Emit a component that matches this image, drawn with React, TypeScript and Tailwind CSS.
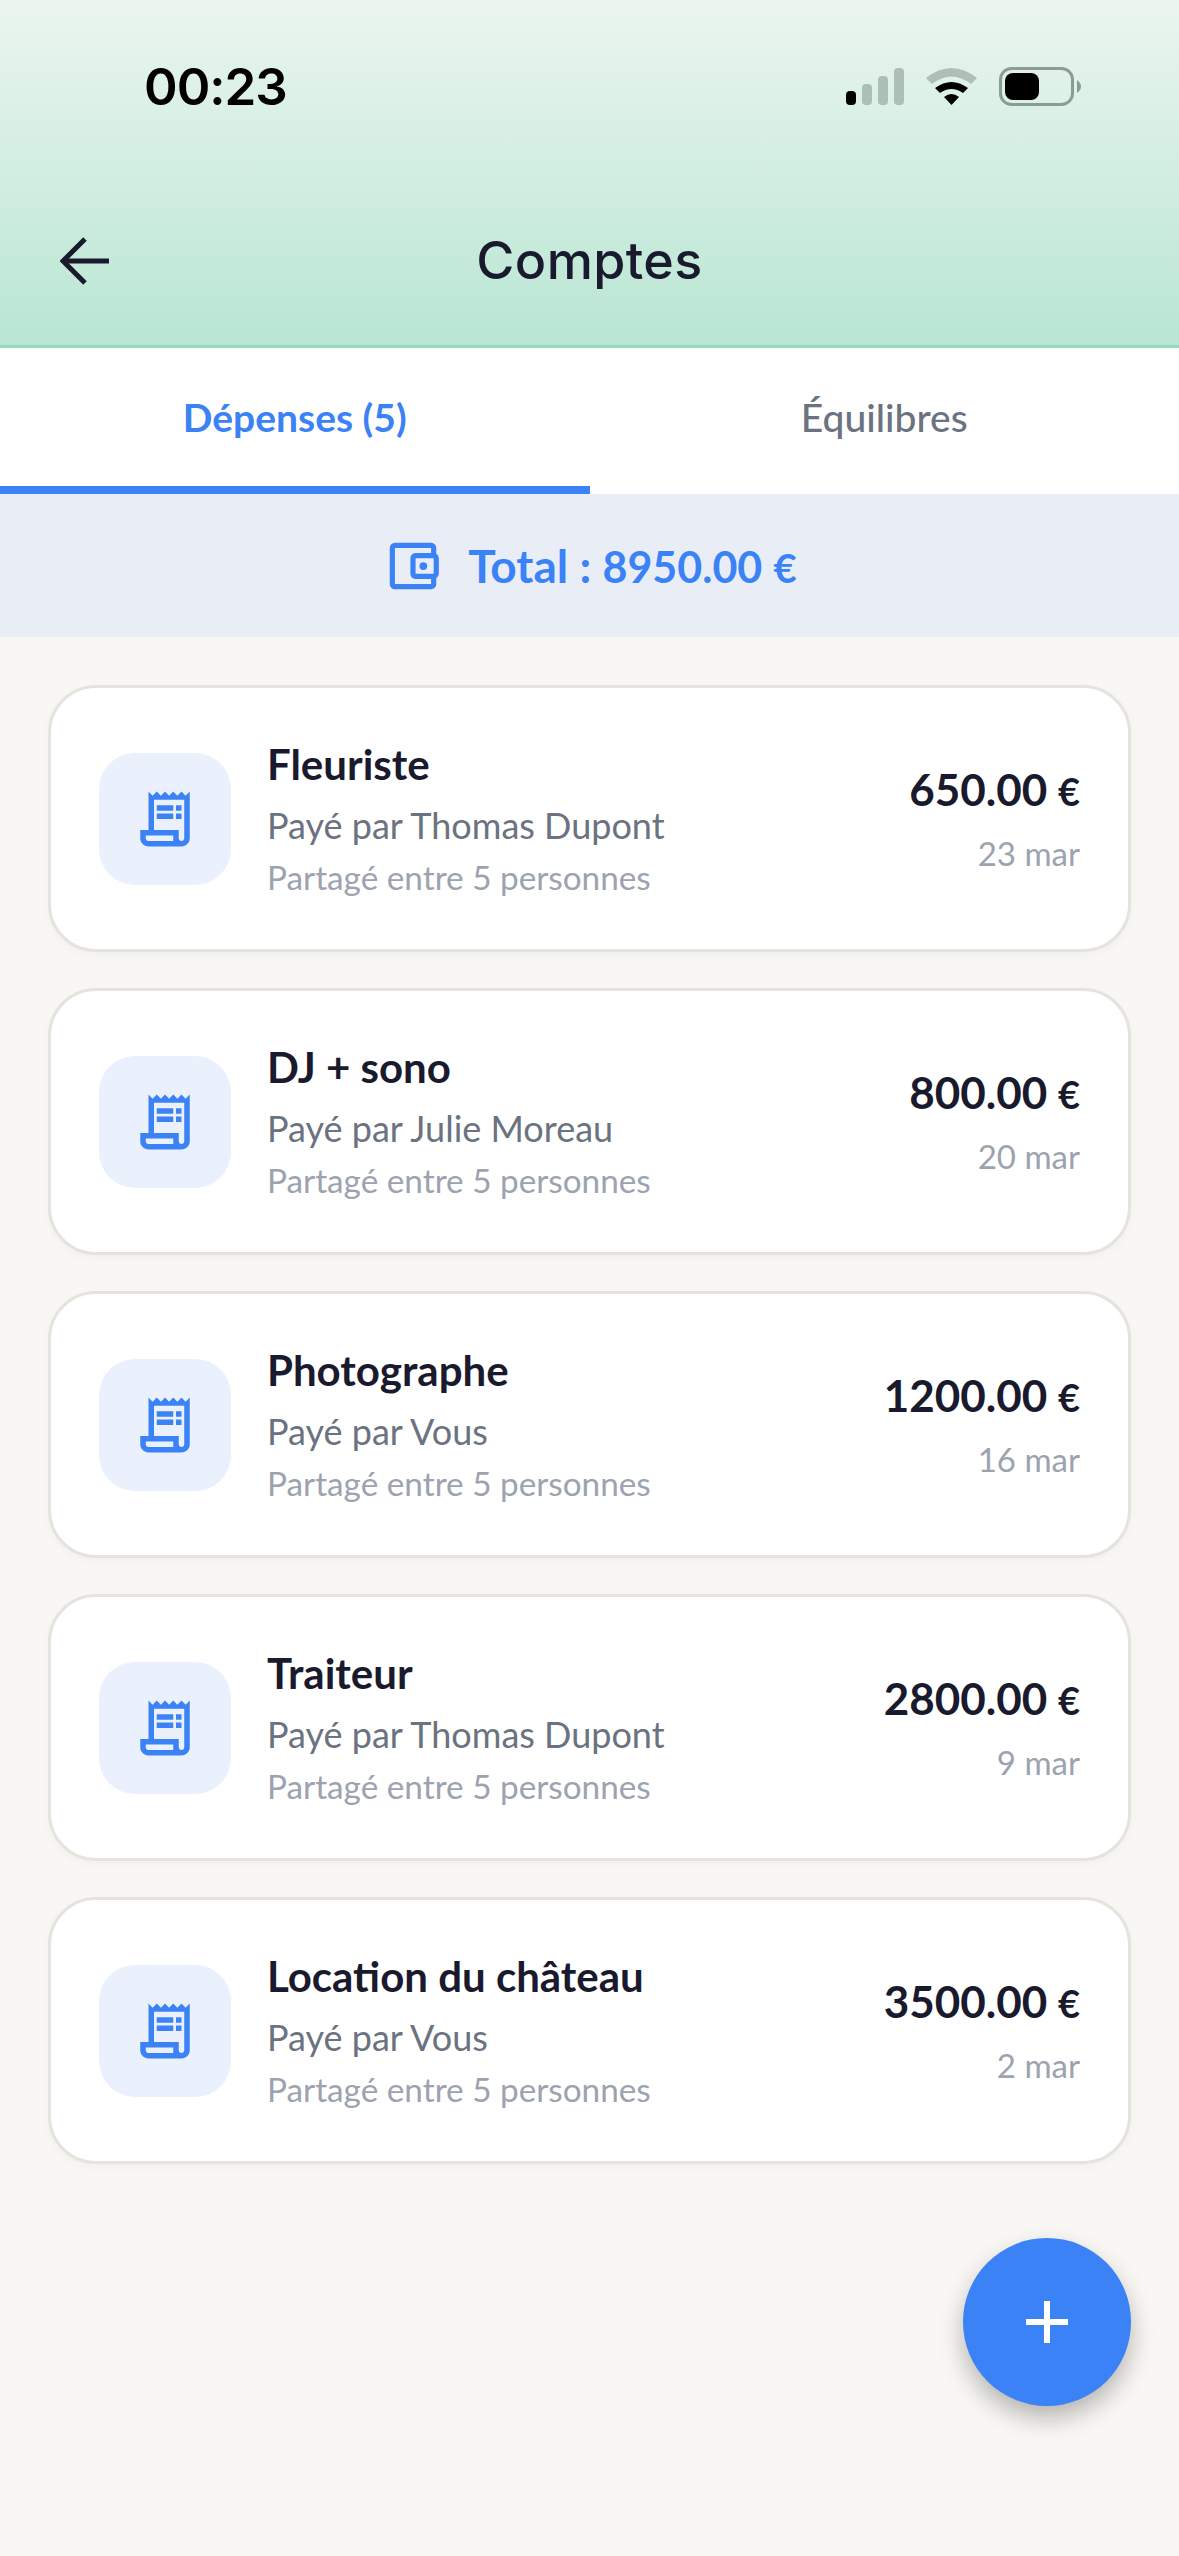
import React from 'react';
import { MdOutlineAccountBalanceWallet, MdOutlineReceiptLong } from 'react-icons/md';

const expenses = [
  { title: 'Fleuriste', payer: 'Payé par Thomas Dupont', amount: '650.00', date: '23 mar' },
  { title: 'DJ + sono', payer: 'Payé par Julie Moreau', amount: '800.00', date: '20 mar' },
  { title: 'Photographe', payer: 'Payé par Vous', amount: '1200.00', date: '16 mar' },
  { title: 'Traiteur', payer: 'Payé par Thomas Dupont', amount: '2800.00', date: '9 mar' },
  { title: 'Location du château', payer: 'Payé par Vous', amount: '3500.00', date: '2 mar' },
];

const StatusIcons = () => (
  <div className="flex items-center">
    <svg width="58" height="37" viewBox="0 0 58 37" className="block">
      <rect x="0" y="23" width="10" height="14" rx="4" fill="#000" />
      <rect x="16" y="16" width="10" height="21" rx="4" fill="#aebfb6" />
      <rect x="32" y="8" width="10" height="29" rx="4" fill="#aebfb6" />
      <rect x="48" y="0" width="10" height="37" rx="4" fill="#aebfb6" />
    </svg>
    <svg width="51" height="37" viewBox="0 0 51 37" className="block ml-[22px]">
      <path d="M0 10 Q25.5 -10 51 10 L45 16 Q25.5 1 6 16 Z" fill="#aebfb6" />
      <path d="M9 20 Q25.5 8 42 20 L37 25 Q25.5 17 14 25 Z" fill="#000" />
      <path d="M18 29 Q25.5 23 33 29 L25.5 37 Z" fill="#000" />
    </svg>
    <svg width="82" height="39" viewBox="0 0 82 39" className="block ml-[22px]">
      <rect x="1.5" y="1.5" width="72" height="36" rx="11" fill="none" stroke="#8a9c93" strokeWidth="3" />
      <rect x="6" y="6" width="34" height="27" rx="8" fill="#000" />
      <path d="M78 13 Q82 16 82 19.5 Q82 23 78 26 Z" fill="#8a9c93" />
    </svg>
  </div>
);

export default function App() {
  return (
    <div className="relative min-h-[2556px] bg-[#f8f7f3] font-['Lato',sans-serif]">
      <header className="h-[348px] border-b-[3px] border-[#93dcc0] bg-gradient-to-b from-[#ebf5ef] to-[#b8e6d3]">
        <div className="flex h-[64px] translate-y-[54px] items-center justify-between pl-[144px] pr-[98px]">
          <span className="font-['Inter',sans-serif] text-[51px] font-semibold leading-none tracking-[-1px] text-black">00:23</span>
          <StatusIcons />
        </div>
        <div className="mt-[149px] flex h-[96px] items-center justify-between px-[60px]">
          <svg width="49" height="48" viewBox="0 0 49 48" fill="none" stroke="#1a1a2e" strokeWidth="5" className="block">
            <path d="M25 2 L3 24 L25 46" />
            <path d="M3 24 H49" />
          </svg>
          <h1 className="font-['Inter',sans-serif] text-[52px] font-medium leading-none tracking-[0.4px] text-[#1a1a2e]">Comptes</h1>
          <div className="w-[49px]" />
        </div>
      </header>

      <nav className="flex h-[146px] bg-white">
        <div className="flex w-1/2 items-center justify-center border-b-[8px] border-[#3b82f6] text-[39px] font-bold text-[#3b82f6]">
          Dépenses (5)
        </div>
        <div className="flex w-1/2 items-center justify-center pb-[8px] text-[39px] font-medium text-[#6b7280]">
          Équilibres
        </div>
      </nav>

      <div className="flex h-[143px] items-center justify-center gap-[24px] bg-[#e9eef6] text-[#3b82f6]">
        <MdOutlineAccountBalanceWallet size={62} />
        <span className="text-[46px] font-bold">
          Total : <span className="text-[43px]">8950.00</span> <span className="text-[40px]">€</span>
        </span>
      </div>

      <div className="flex flex-col gap-[36px] px-[48px] pt-[48px]">
        {expenses.map((item) => (
          <div
            key={item.title}
            className="flex h-[267px] items-center rounded-[48px] border-[3px] border-[#e5e3de] bg-white px-[48px] shadow-[0_3px_9px_rgba(0,0,0,0.03)]"
          >
            <div className="flex h-[132px] w-[132px] shrink-0 items-center justify-center rounded-[36px] bg-[#eaf1fd] text-[#3b82f6]">
              <MdOutlineReceiptLong size={66} />
            </div>
            <div className="ml-[36px] flex-1">
              <div className="text-[42px] font-bold leading-[48px] text-[#1a1a2e]">{item.title}</div>
              <div className="mt-[15px] text-[36px] leading-[44px] text-[#6b7280]">{item.payer}</div>
              <div className="mt-[10px] text-[33.3px] leading-[40px] text-[#9ca3af]">Partagé entre 5 personnes</div>
            </div>
            <div className="text-right">
              <div className="text-[44px] font-bold leading-[50px] text-[#1a1a2e]">
                {item.amount} <span className="text-[38px]">€</span>
              </div>
              <div className="mt-[17px] text-[33px] leading-[40px] text-[#9ca3af]">{item.date}</div>
            </div>
          </div>
        ))}
      </div>

      <button className="absolute bottom-[150px] right-[48px] flex h-[168px] w-[168px] items-center justify-center rounded-full bg-[#3b82f6] shadow-[0_12px_24px_rgba(0,0,0,0.27)]">
        <svg width="42" height="42" viewBox="0 0 42 42" stroke="#fff" strokeWidth="6" className="block">
          <path d="M21 0 V42 M0 21 H42" />
        </svg>
      </button>
    </div>
  );
}
